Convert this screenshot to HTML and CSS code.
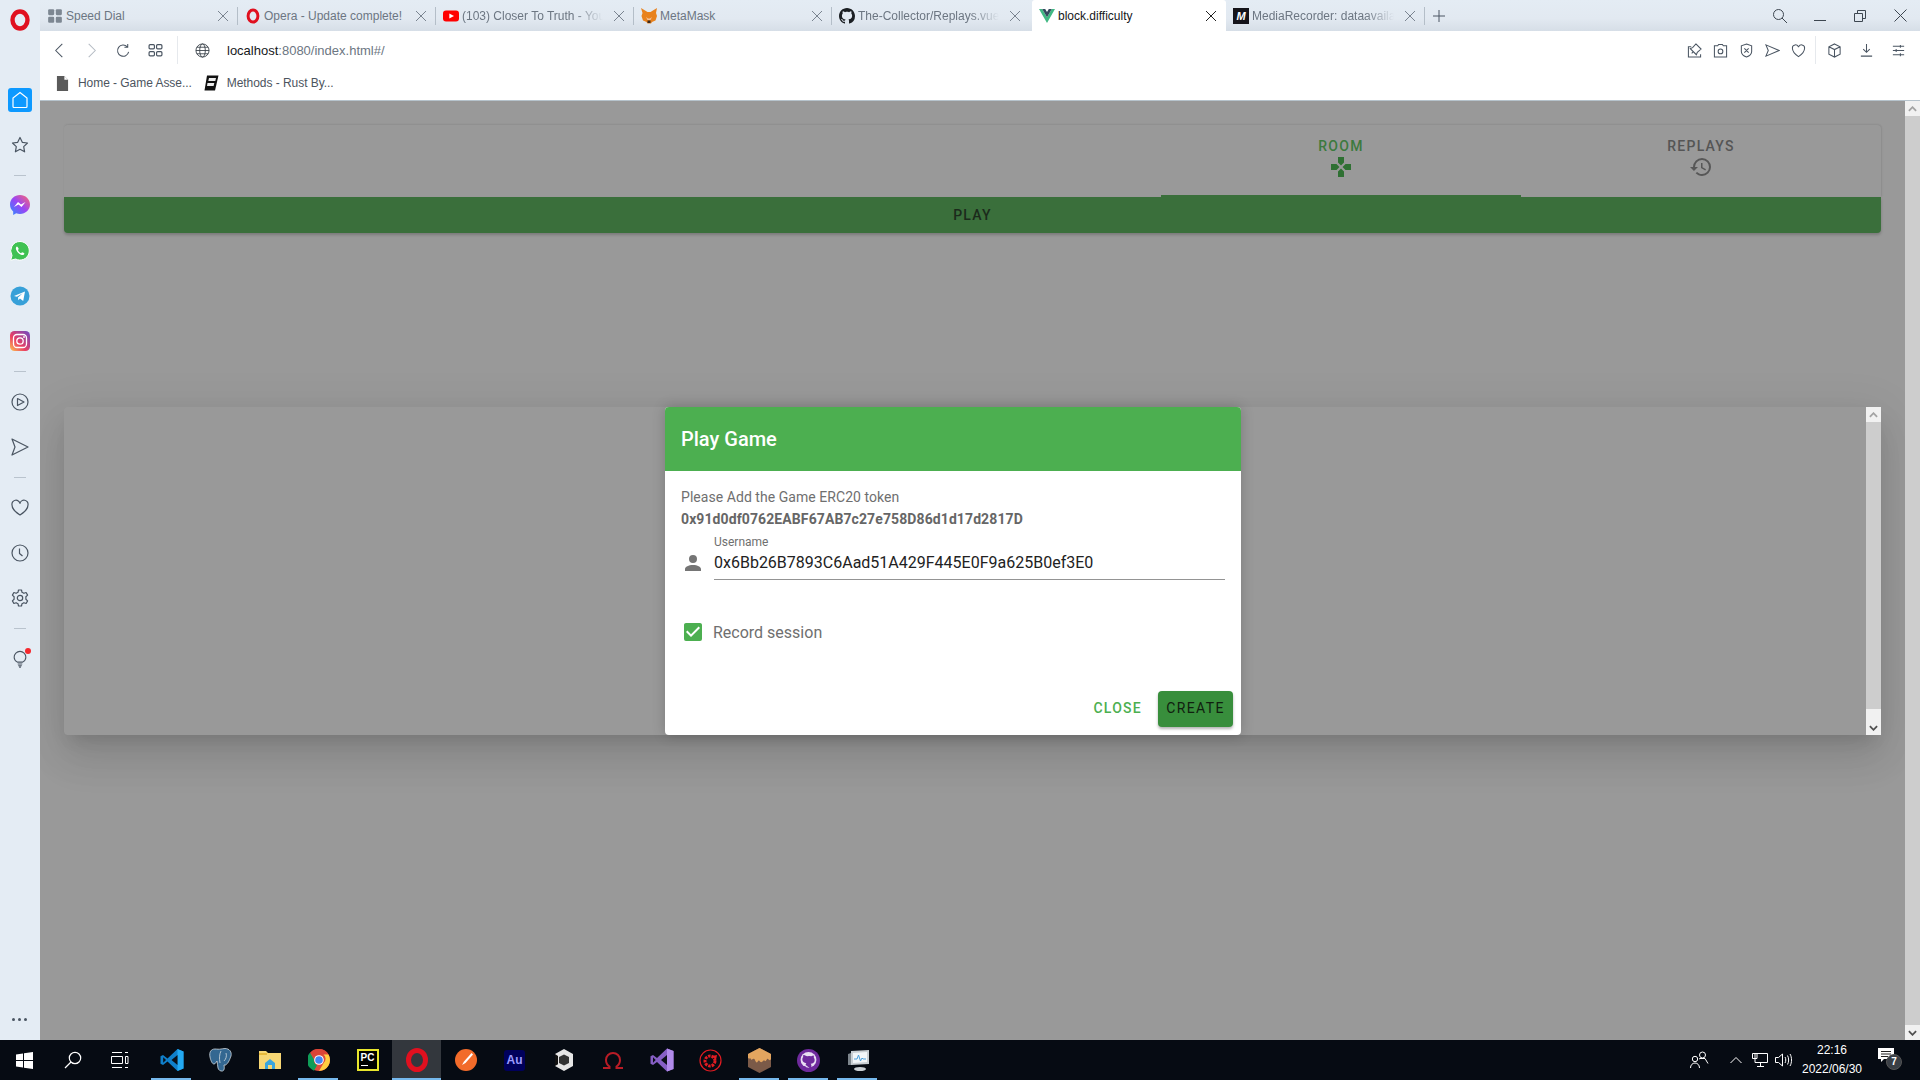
FILE: index.html
```html
<!DOCTYPE html>
<html lang="en">
<head>
    <meta charset="UTF-8">
    <title>block.difficulty</title>
    <link rel="stylesheet" href="styles.css">
</head>
<body>
<div class="desktop">
    <div class="browser">
        <!-- opera sidebar -->
        <aside class="sidebar">
            <div class="side-logo">
                <svg width="20" height="22" viewBox="0 0 20 22"><ellipse cx="10" cy="11" rx="7.500" ry="8.500" fill="none" stroke="#e0101f" stroke-width="4.400"/></svg>
            </div>
            <div class="side-item">
                <div class="side-home"><svg width="18" height="18" viewBox="0 0 18 18"><path d="M9 1.500L16 7v8.500a1 1 0 0 1-1 1H3a1 1 0 0 1-1-1V7z" fill="none" stroke="#fff" stroke-width="1.200"/></svg></div>
            </div>
            <div class="side-item">
                <svg class="side-icon" viewBox="0 0 18 18"><path d="M9 1.500l2.300 4.800 5.200.7-3.800 3.600.9 5.200L9 13.300l-4.600 2.500.9-5.200L1.500 7l5.200-.7z"/></svg>
            </div>
            <div class="side-sep"><span></span></div>
            <div class="side-item">
                <svg width="20" height="21" viewBox="0 0 20 21"><defs><linearGradient id="msg" x1="0" y1="1" x2="1" y2="0"><stop offset="0" stop-color="#2a8cff"/><stop offset=".5" stop-color="#9a45f5"/><stop offset="1" stop-color="#ff6a6a"/></linearGradient></defs><path d="M10 0C4.500 0 0 4.100 0 9.500c0 2.900 1.200 5.300 3.200 7V20l3-1.700c1.200.4 2.500.6 3.800.6 5.500 0 10-4.100 10-9.400S15.500 0 10 0z" fill="url(#msg)"/><path d="M4 12l4-5 3 2.400L15.500 7l-4 5-3-2.400z" fill="#fff"/></svg>
            </div>
            <div class="side-item">
                <svg width="20" height="20" viewBox="0 0 20 20"><path d="M10 .5a9.300 9.300 0 0 0-8 14L.7 19.300l4.900-1.300A9.300 9.300 0 1 0 10 .5z" fill="#3fc252" stroke="#fff"/><path d="M7 5.500c-1.200.6-1.500 2-.6 3.800 1 2 2.700 3.600 4.600 4.400 1.700.7 3 .2 3.400-1 .2-.5-2-1.700-2.400-1.500l-.9 1c-1.300-.4-2.700-1.800-3.200-3.100l.9-1C9 8.300 7.500 5.300 7 5.500z" fill="#fff"/></svg>
            </div>
            <div class="side-item">
                <svg width="20" height="20" viewBox="0 0 20 20"><circle cx="10" cy="10" r="9.500" fill="#37a0d8"/><path d="M4 10l11-4.500-1.800 9.500-3.300-2.400-1.500 1.600-.4-2.800 4.700-4.200-5.800 3.500z" fill="#fff"/></svg>
            </div>
            <div class="side-item">
                <svg width="20" height="20" viewBox="0 0 20 20"><defs><linearGradient id="ig" x1="0" y1="1" x2="1" y2="0"><stop offset="0" stop-color="#fdc74e"/><stop offset=".4" stop-color="#ea3f63"/><stop offset="1" stop-color="#6b4bc6"/></linearGradient></defs><rect width="20" height="20" rx="4.500" fill="url(#ig)"/><rect x="3.500" y="3.500" width="13" height="13" rx="3.500" fill="none" stroke="#fff" stroke-width="1.300"/><circle cx="10" cy="10" r="3.200" fill="none" stroke="#fff" stroke-width="1.300"/><circle cx="14" cy="6" r=".9" fill="#fff"/></svg>
            </div>
            <div class="side-sep"><span></span></div>
            <div class="side-item">
                <svg class="side-icon" viewBox="0 0 18 18"><circle cx="9" cy="9" r="8"/><path d="M6.500 5.500L13 9l-6.500 3.500z"/></svg>
            </div>
            <div class="side-item">
                <svg class="side-icon" viewBox="0 0 18 18"><path d="M1 1l16 8-16 8 3-8z"/></svg>
            </div>
            <div class="side-sep"><span></span></div>
            <div class="side-item">
                <svg class="side-icon" viewBox="0 0 18 18"><path d="M9 16S1 11 1 6a4 4 0 0 1 8-1.500A4 4 0 0 1 17 6c0 5-8 10-8 10z"/></svg>
            </div>
            <div class="side-item">
                <svg class="side-icon" viewBox="0 0 18 18"><circle cx="9" cy="9" r="8"/><path d="M8.500 4.500V9.500l3 2.500"/></svg>
            </div>
            <div class="side-item">
                <svg class="side-icon" viewBox="0 0 18 18"><circle cx="9" cy="9" r="2.700"/><path d="M7.500 1h3l.5 2.300 1.900 1 2.200-.8 1.500 2.600-1.700 1.600v2.600l1.700 1.600-1.500 2.600-2.200-.8-1.900 1-.5 2.300h-3L7 14.700l-1.900-1-2.200.8L1.400 11.900l1.700-1.600V7.700L1.400 6.100l1.500-2.600 2.200.8L7 3.300z"/></svg>
            </div>
            <div class="side-sep"><span></span></div>
            <div class="side-item">
                <svg class="side-icon" viewBox="0 0 18 20"><path d="M6 13.500C4 12.300 2.500 10.500 2.500 8a6.500 6.500 0 0 1 13 0c0 2.500-1.500 4.300-3.500 5.500zM6.500 15.500h5M7 17.500h4M8 19h2"/></svg>
                <span class="side-dot"></span>
            </div>
            <div class="side-more"><i></i><i></i><i></i></div>
        </aside>

        <div class="window">
            <!-- tabs -->
            <div class="tabstrip">
                <div class="tab">
                    <svg class="favicon" viewBox="0 0 14 14" fill="#7d8792"><rect x="1" y="1" width="5.300" height="5.300" rx="1"/><rect x="7.700" y="1" width="5.300" height="5.300" rx="1"/><rect x="1" y="7.700" width="5.300" height="5.300" rx="1"/><rect x="7.700" y="7.700" width="5.300" height="5.300" rx="1"/></svg>
                    <span class="tab-label">Speed Dial</span>
                    <svg class="tab-close" viewBox="0 0 10 10"><path d="M0 0l10 10M10 0L0 10"/></svg>
                </div>
                <div class="tab">
                    <svg class="favicon" viewBox="0 0 14 14"><ellipse cx="7" cy="7" rx="4.300" ry="5.300" fill="none" stroke="#e0101f" stroke-width="2.600"/></svg>
                    <span class="tab-label">Opera - Update complete!</span>
                    <svg class="tab-close" viewBox="0 0 10 10"><path d="M0 0l10 10M10 0L0 10"/></svg>
                </div>
                <div class="tab">
                    <svg class="favicon" viewBox="0 0 16 14"><rect y="1.500" width="16" height="11" rx="3" fill="#f00"/><path d="M6.300 4.500L11 7l-4.700 2.500z" fill="#fff"/></svg>
                    <span class="tab-label fade">(103) Closer To Truth - You</span>
                    <svg class="tab-close" viewBox="0 0 10 10"><path d="M0 0l10 10M10 0L0 10"/></svg>
                </div>
                <div class="tab">
                    <svg class="favicon" viewBox="0 0 16 16"><path d="M0 0l6.500 4h3L16 0l-1 5 1 3-1.500 4.500-3.500 1.500-1 1.500H6.500L5.500 14 2 12.500.5 8l1-3z" fill="#e8821e"/><path d="M5 9l1.500 3h3L11 9l-2 1.500H7z" fill="#f3c29a"/><path d="M6.500 12.500h3V15h-3z" fill="#3a2a20"/></svg>
                    <span class="tab-label">MetaMask</span>
                    <svg class="tab-close" viewBox="0 0 10 10"><path d="M0 0l10 10M10 0L0 10"/></svg>
                </div>
                <div class="tab">
                    <svg class="favicon" viewBox="0 0 16 16"><path fill="#1b1f23" d="M8 0C3.580 0 0 3.580 0 8c0 3.540 2.290 6.530 5.470 7.590.4.070.55-.17.55-.38 0-.19-.01-.82-.01-1.490-2.010.37-2.530-.49-2.690-.94-.09-.23-.48-.94-.82-1.130-.28-.15-.68-.52-.01-.53.63-.01 1.080.58 1.230.82.72 1.210 1.870.87 2.330.66.070-.52.28-.87.51-1.070-1.780-.2-3.640-.89-3.640-3.950 0-.87.31-1.590.82-2.150-.08-.2-.36-1.020.08-2.120 0 0 .67-.21 2.200.82.64-.18 1.320-.27 2-.27.68 0 1.360.09 2 .27 1.530-1.040 2.200-.82 2.200-.82.44 1.100.16 1.920.08 2.120.51.56.82 1.270.82 2.150 0 3.070-1.870 3.750-3.650 3.950.29.25.54.73.54 1.480 0 1.070-.01 1.930-.01 2.200 0 .21.15.46.55.38A8.013 8.013 0 0 0 16 8c0-4.420-3.580-8-8-8z"/></svg>
                    <span class="tab-label fade">The-Collector/Replays.vue a</span>
                    <svg class="tab-close" viewBox="0 0 10 10"><path d="M0 0l10 10M10 0L0 10"/></svg>
                </div>
                <div class="tab tab-active">
                    <svg class="favicon" viewBox="0 0 16 14"><path d="M0 0h3.200L8 8.200 12.800 0H16L8 14z" fill="#41b883"/><path d="M3.200 0h3L8 3.100 9.800 0h3L8 8.200z" fill="#35495e"/></svg>
                    <span class="tab-label">block.difficulty</span>
                    <svg class="tab-close" viewBox="0 0 10 10"><path d="M0 0l10 10M10 0L0 10"/></svg>
                </div>
                <div class="tab tab-last">
                    <span class="mdn-icon">M</span>
                    <span class="tab-label fade">MediaRecorder: dataavailat</span>
                    <svg class="tab-close" viewBox="0 0 10 10"><path d="M0 0l10 10M10 0L0 10"/></svg>
                </div>
                <svg class="new-tab" viewBox="0 0 12 12"><path d="M6 0v12M0 6h12"/></svg>
                <div class="win-controls">
                    <div class="win-btn"><svg width="16" height="16" viewBox="0 0 16 16"><circle cx="6.500" cy="6.500" r="5"/><path d="M10 10l5 5"/></svg></div>
                    <div class="win-btn"><svg width="12" height="12" viewBox="0 0 12 12"><path d="M0 10.500h12"/></svg></div>
                    <div class="win-btn"><svg width="12" height="12" viewBox="0 0 12 12"><path d="M.5 3.500h8v8h-8zM3.500 3.500v-3h8v8h-3"/></svg></div>
                    <div class="win-btn"><svg width="13" height="13" viewBox="0 0 13 13"><path d="M.5.500l12 12M12.500.500l-12 12"/></svg></div>
                </div>
            </div>

            <!-- address bar -->
            <div class="toolbar">
                <div class="tool-slot"><svg class="tool-icon" viewBox="0 0 16 16"><path d="M11 1L4 8l7 7"/></svg></div>
                <div class="tool-slot"><svg class="tool-icon tool-off" viewBox="0 0 16 16"><path d="M5 1l7 7-7 7"/></svg></div>
                <div class="tool-slot"><svg class="tool-icon" viewBox="0 0 16 16"><path d="M13.500 9.500A6 6 0 1 1 12 4M12.500 1v3.500H9"/></svg></div>
                <div class="tool-slot"><svg class="tool-icon" viewBox="0 0 14 14"><rect x="1" y="1.500" width="5" height="4" rx="1"/><rect x="8" y="1.500" width="5" height="4" rx="1"/><rect x="1" y="8" width="5" height="4" rx="1"/><rect x="8" y="8" width="5" height="4" rx="1"/></svg></div>
                <span class="tool-sep first-sep"></span>
                <svg class="globe" viewBox="0 0 16 16"><circle cx="8" cy="8" r="7"/><ellipse cx="8" cy="8" rx="3" ry="7"/><path d="M1 8h14M2 4.500h12M2 11.500h12"/></svg>
                <div class="url"><span class="url-host">localhost</span>:8080/index.html#/</div>
                <div class="tool-right">
                    <div class="tool-slot small"><svg class="tool-icon" viewBox="0 0 16 16"><path d="M4.500 4H1.500v11h13v-3M9.500 1L15 6.500l-4 3.500-1 2.500L3.500 6l2.500-1zM5 11l2-2"/></svg></div>
                    <div class="tool-slot small"><svg class="tool-icon" viewBox="0 0 16 16"><path d="M1.500 3h3.500l1-1.500h4L11 3h3.500v12h-13z"/><circle cx="8" cy="9" r="2.500"/></svg></div>
                    <div class="tool-slot small"><svg class="tool-icon" viewBox="0 0 16 16"><path d="M8 1l5.500 2v6c0 3-3 5-5.500 6-2.500-1-5.500-3-5.500-6V3zM5.700 5.700l4.600 4.600M10.300 5.700l-4.600 4.600"/></svg></div>
                    <div class="tool-slot small"><svg class="tool-icon" viewBox="0 0 16 16"><path d="M1 2l14 6-14 6 2.500-6z"/></svg></div>
                    <div class="tool-slot small"><svg class="tool-icon" viewBox="0 0 16 16"><path d="M8 14.500S1.500 10 1.500 5.500a3.300 3.300 0 0 1 6.500-1 3.300 3.300 0 0 1 6.500 1C14.500 10 8 14.500 8 14.500z"/></svg></div>
                    <span class="tool-sep"></span>
                    <div class="tool-slot"><svg class="tool-icon" viewBox="0 0 16 16"><path d="M8 1l6 3v8l-6 3-6-3V4zM2 4l6 3 6-3M8 7v8"/></svg></div>
                    <div class="tool-slot"><svg class="tool-icon" viewBox="0 0 16 16"><path d="M8 1v9M4.500 6.500L8 10l3.500-3.500M2 14h12"/></svg></div>
                    <div class="tool-slot"><svg class="tool-icon" viewBox="0 0 16 16"><path d="M2 3.500h12M2 8h12M2 12.500h12M10 2v3M5.500 6.500v3M10 11v3"/></svg></div>
                </div>
            </div>

            <!-- bookmarks -->
            <div class="bookmarks">
                <svg class="bm-icon" viewBox="0 0 14 16"><path d="M1 0h8l4 4v12H1z" fill="#5a5a5a"/><path d="M9 0v4h4" fill="#fff"/></svg>
                <span class="bm-label">Home - Game Asse...</span>
                <svg class="bm-book" viewBox="0 0 16 16"><path d="M4 .5h11.500L12 15.500H1.500z" fill="#111"/><path d="M6 3h7l-.7 3h-7zM4.500 8h6.800l-.7 3H4z" fill="#eee"/></svg>
                <span class="bm-label">Methods - Rust By...</span>
            </div>

            <!-- the page, under the dialog scrim -->
            <div class="viewport">
                <main class="page">
                    <section class="nav-card">
                        <div class="nav-tab nav-tab-on">
                            <span>ROOM</span>
                            <svg viewBox="0 0 24 24"><path d="M16.500,9L13.500,12L16.500,15H22V9M9,16.500V22H15V16.500L12,13.500M7.500,9H2V15H7.500L10.500,12M15,7.500V2H9V7.500L12,10.500L15,7.500Z"/></svg>
                        </div>
                        <div class="nav-tab">
                            <span>REPLAYS</span>
                            <svg viewBox="0 0 24 24"><path d="M13.500,8H12V13L16.280,15.540L17,14.330L13.500,12.250V8M13,3A9,9 0 0,0 4,12H1L4.960,16.030L9,12H6A7,7 0 0,1 13,5A7,7 0 0,1 20,12A7,7 0 0,1 13,19C11.070,19 9.320,18.210 8.060,16.940L6.640,18.360C8.270,20 10.500,21 13,21A9,9 0 0,0 22,12A9,9 0 0,0 13,3"/></svg>
                        </div>
                    </section>
                    <div class="play-bar">PLAY</div>

                    <section class="room-card">
                        <div class="dialog">
                            <header class="dialog-head">Play Game</header>
                            <div class="dialog-body">
                                <p class="msg">Please Add the Game ERC20 token</p>
                                <p class="msg token">0x91d0df0762EABF67AB7c27e758D86d1d17d2817D</p>
                                <div class="field">
                                    <svg class="mdi" viewBox="0 0 24 24"><path d="M12,4A4,4 0 0,1 16,8A4,4 0 0,1 12,12A4,4 0 0,1 8,8A4,4 0 0,1 12,4M12,14C16.420,14 20,15.790 20,18V20H4V18C4,15.790 7.580,14 12,14Z"/></svg>
                                    <div class="field-box">
                                        <label class="field-label">Username</label>
                                        <div class="field-value">0x6Bb26B7893C6Aad51A429F445E0F9a625B0ef3E0</div>
                                    </div>
                                </div>
                                <div class="check-row">
                                    <svg class="mdi check" viewBox="0 0 24 24"><path d="M10,17L5,12L6.410,10.580L10,14.170L17.590,6.580L19,8M19,3H5C3.890,3 3,3.890 3,5V19A2,2 0 0,0 5,21H19A2,2 0 0,0 21,19V5C21,3.890 20.100,3 19,3Z"/></svg>
                                    <span>Record session</span>
                                </div>
                            </div>
                            <div class="dialog-actions">
                                <button class="btn-text">CLOSE</button>
                                <button class="btn-create">CREATE</button>
                            </div>
                        </div>
                        <div class="inner-scroll">
                            <div class="sb-up"><svg viewBox="0 0 10 6"><path d="M1 5l4-4 4 4" stroke="#a3a3a3"/></svg></div>
                            <div class="sb-track"></div>
                            <div class="sb-down"><svg viewBox="0 0 10 6"><path d="M1 1l4 4 4-4" stroke="#505050"/></svg></div>
                        </div>
                    </section>
                </main>
                <div class="page-scroll">
                    <div class="sb-up"><svg viewBox="0 0 10 6"><path d="M1 5l4-4 4 4" stroke="#a3a3a3"/></svg></div>
                    <div class="sb-track"></div>
                    <div class="sb-down"><svg viewBox="0 0 10 6"><path d="M1 1l4 4 4-4" stroke="#505050"/></svg></div>
                </div>
            </div>
        </div>
    </div>

    <!-- windows taskbar -->
    <footer class="taskbar">
        <div class="task"><svg width="17" height="17" viewBox="0 0 17 17" fill="#fff"><path d="M0 2.400l7-1v6.600H0zM8 1.200L17 0v8H8zM0 9h7v6.600l-7-1zM8 9h9v8l-9-1.200z"/></svg></div>
        <div class="task"><svg class="nudge-search" width="18" height="18" viewBox="0 0 18 18" fill="none" stroke="#fff" stroke-width="1.200"><circle cx="11" cy="7" r="5.700"/><path d="M7 11l-6 6"/></svg></div>
        <div class="task"><svg class="nudge-view" width="18" height="16" viewBox="0 0 18 16" fill="none" stroke="#fff"><path d="M.5 4.500h11v7H.5zM1 .5h10M1 15.500h10M14 .5h3M14 15.500h3M14.500 4.500h2.500v7h-2.500z"/></svg></div>
        <div class="task task-on">
            <svg width="24" height="24" viewBox="0 0 24 24"><path d="M17.500 1L7.500 10.500 3 7 .5 8.200v7.600L3 17l4.500-3.500 10 9.500 6-2.500V3.500z" fill="#0f7fca"/><path d="M17.500 1l6 2.500v17l-6 2.500z" fill="#23a9f2"/><path d="M17.500 7l-6 5 6 5z" fill="#0a0f17"/><path d="M3.200 9.200v5.600L6 12z" fill="#0a0f17"/></svg>
        </div>
        <div class="task">
            <svg width="24" height="24" viewBox="0 0 24 24"><path d="M6 1c-4 0-6 3-5 8 .6 3 2 7 4 7 1.500 0 2-2 3-3 .5 2 .5 5 1 7s2.500 3.500 4.500 3c2-.5 2-3 1.500-6 3 .5 2-1 3-1.500 1 0 3-4.500 4-7.500 1-4-1.500-7.500-6-7.500-1.500 0-3 .5-4 .5C10 1.500 8 1 6 1z" fill="#336791" stroke="#cfd8de" stroke-width=".8"/><path d="M12 3c-1.500 3-2 7-1 12M17 5c1 3 0 6-2 8" fill="none" stroke="#cfd8de" stroke-width=".8"/></svg>
        </div>
        <div class="task">
            <svg width="22" height="20" viewBox="0 0 22 20"><path d="M0 1h7l2 2h13v16H0z" fill="#f7d774"/><path d="M0 3h8v2H0z" fill="#e6b93a"/><path d="M6 13l5-4 5 4v6H6z" fill="#3aa5dc"/><path d="M9 15h4v4H9z" fill="#f7d774"/></svg>
        </div>
        <div class="task task-on">
            <svg width="22" height="22" viewBox="0 0 22 22"><circle cx="11" cy="11" r="11" fill="#dd4b3e"/><path d="M11 0a11 11 0 0 1 9.500 5.500H11a5.500 5.500 0 0 0-5 3L2 3.800A11 11 0 0 1 11 0z" fill="#db4437"/><path d="M2 3.800l4 6.600a5.500 5.500 0 0 0 3 5.800L6 21.700A11 11 0 0 1 2 3.800z" fill="#0f9d58"/><path d="M20.500 5.500A11 11 0 0 1 11 22l4.800-8.200A5.500 5.500 0 0 0 15.500 5.500z" fill="#ffcd40"/><circle cx="11" cy="11" r="4.800" fill="#fff"/><circle cx="11" cy="11" r="3.800" fill="#4285f4"/></svg>
        </div>
        <div class="task">
            <div class="pc-logo"><span>PC</span><i></i></div>
        </div>
        <div class="task task-on task-hot">
            <svg width="24" height="24" viewBox="0 0 24 24"><ellipse cx="12" cy="12" rx="8.500" ry="9.500" fill="none" stroke="#e0101f" stroke-width="5"/></svg>
        </div>
        <div class="task">
            <svg width="22" height="22" viewBox="0 0 22 22"><circle cx="11" cy="11" r="11" fill="#f26b2a"/><path d="M16.500 4L9 12.500l-2 3.500 3.500-2L18 5.500z" fill="#fff"/></svg>
        </div>
        <div class="task"><div class="au-logo">Au</div></div>
        <div class="task">
            <svg width="20" height="24" viewBox="0 0 20 24"><path d="M10 1l9 5v12l-9 5-9-5V6z" fill="#e6e6e6"/><path d="M5 9l5-2.500L15 9v6l-5 2.500L5 15z" fill="#333"/><path d="M1 6v12l3-1.700V8z" fill="#111"/></svg>
        </div>
        <div class="task">
            <svg width="22" height="20" viewBox="0 0 22 20" fill="none" stroke="#b81c26" stroke-width="2"><path d="M1 18h6.500v-1.500C5 15 4 13 4 10a7 7 0 0 1 14 0c0 3-1 5-3.500 6.500V18H21"/></svg>
        </div>
        <div class="task">
            <svg width="24" height="24" viewBox="0 0 24 24"><path d="M17 .5L7 10 3 7 .5 8.200v7.600L3 17l4-3 10 9.500 6.500-2.500V3z" fill="#865fc5"/><path d="M17 .5l6.500 2.500v18L17 23.500z" fill="#b18bea"/><path d="M17 7l-6 5 6 5z" fill="#0a0f17"/><path d="M3 9.300v5.400L5.700 12z" fill="#0a0f17"/></svg>
        </div>
        <div class="task">
            <svg width="23" height="23" viewBox="0 0 23 23"><circle cx="11.500" cy="11.500" r="10.500" fill="none" stroke="#e11c22" stroke-width="1.200"/><circle cx="11" cy="12" r="5" fill="none" stroke="#e11c22" stroke-width="3" stroke-dasharray="2.500 1"/><path d="M13 7l5-1-1 5z" fill="#e11c22"/></svg>
        </div>
        <div class="task task-on">
            <svg width="23" height="25" viewBox="0 0 23 25"><path d="M11.500 0L23 6v13l-11.500 6L0 19V6z" fill="#7b5a48"/><path d="M11.500 0L23 6v5c-1 2-2 1-3 0s-2 3-3 2-1-1-2 0-2 2-3.500 0-2 3-3.500 1-1-4-3-3-2 1-2 0-2 0-3-1V6z" fill="#e3a55f"/></svg>
        </div>
        <div class="task task-on">
            <svg width="23" height="23" viewBox="0 0 16 16"><circle cx="8" cy="8" r="8" fill="#6e2a9c"/><circle cx="8" cy="7.500" r="5.500" fill="#e9dff2"/><path d="M6 14v-2c-2 .4-2.500-1-3-1.500M10 14v-2.500c0-.6-.2-1-.5-1.200 1.600-.2 2.800-.9 2.800-2.700 0-.7-.2-1.200-.6-1.600.1-.4.1-1-.1-1.500-.6 0-1.200.3-1.600.6a6 6 0 0 0-3 0C5.600 4.400 5 4.100 4.400 4.100c-.2.500-.2 1.100-.1 1.500-.4.400-.6.9-.6 1.600 0 1.800 1.200 2.500 2.800 2.700-.3.200-.5.600-.5 1.200" fill="#6e2a9c"/></svg>
        </div>
        <div class="task task-on">
            <svg width="24" height="24" viewBox="0 0 24 24"><path d="M5 3l18-1v14L5 17z" fill="#c9cfd4"/><path d="M7 5l14-1v10L7 15z" fill="#f2f6f9"/><path d="M8 11h3l1.500-4 2 6 1.500-3 1 1h3" fill="none" stroke="#4a9fdc"/><path d="M2 6l3-1v12H2z" fill="#7c858c"/><ellipse cx="14" cy="21" rx="6" ry="2" fill="#c9cfd4"/></svg>
        </div>

        <div class="tray">
            <svg class="tray-people" width="20" height="18" viewBox="0 0 20 18" fill="none" stroke="#fff"><circle cx="12.500" cy="4" r="3"/><circle cx="5" cy="8" r="2.700"/><path d="M9 8l1-.5h5l3 5M.5 17c0-3 2-5 4.500-5s4.500 2 4.500 5"/></svg>
            <svg class="tray-caret" width="12" height="8" viewBox="0 0 12 8" fill="none" stroke="#fff"><path d="M.5 7L6 1.500 11.500 7"/></svg>
            <svg class="tray-net" width="16" height="14" viewBox="0 0 16 14" fill="none" stroke="#fff"><path d="M3 .5h12.500v9H3zM.5 .5h4.500v5H.5zM5 13.500h7M8.500 9.500v4"/></svg>
            <svg class="tray-vol" width="17" height="14" viewBox="0 0 17 14" fill="none" stroke="#fff"><path d="M.5 4.500h3L7.500 1v12l-4-3.500h-3zM10 4c1 1.500 1 4.500 0 6M12.500 2.500c1.500 2.500 1.500 6.500 0 9M15 1c2 3 2 9 0 12"/></svg>
            <div class="clock"><span>22:16</span><span>2022/06/30</span></div>
            <div class="notify">
                <svg width="16" height="14" viewBox="0 0 16 14"><path d="M0 0h16v11H6l-3 3v-3H0z" fill="#fff"/><path d="M3 3.500h10M3 6h10M3 8.500h7" stroke="#222"/></svg>
                <span class="notify-badge">7</span>
            </div>
        </div>
    </footer>
</div>
</body>
</html>
```

FILE: styles.css
```css
* {
    box-sizing: border-box;
}
body {
    margin: 0;
    font-family: "Liberation Sans", Arial, sans-serif;
    overflow: hidden;
}
.desktop {
    width: 1920px;
    height: 1080px;
    display: flex;
    flex-direction: column;
}
.browser {
    display: flex;
    height: 1040px;
}

/* sidebar */
.sidebar {
    position: relative;
    width: 40px;
    background-color: #e4ecf4;
    flex-shrink: 0;
}
.side-logo {
    height: 77px;
    padding-top: 9px;
    display: flex;
    justify-content: center;
    align-items: flex-start;
}
.side-item {
    position: relative;
    height: 45px;
    display: flex;
    align-items: center;
    justify-content: center;
}
.side-home {
    width: 24px;
    height: 24px;
    background-color: #0d99ff;
    border-radius: 3px;
    display: flex;
    align-items: center;
    justify-content: center;
}
.side-icon {
    width: 18px;
    height: 18px;
    fill: none;
    stroke: #4a5562;
    stroke-width: 1.2;
    stroke-linejoin: round;
}
.side-sep {
    height: 16px;
    display: flex;
    align-items: center;
    justify-content: center;
}
.side-sep span {
    width: 12px;
    height: 1px;
    background-color: #b9c3cd;
}
.side-dot {
    position: absolute;
    top: 12px;
    right: 9px;
    width: 6px;
    height: 6px;
    border-radius: 50%;
    background-color: #f5282d;
}
.side-more {
    position: absolute;
    left: 12px;
    bottom: 19px;
    display: flex;
    gap: 3px;
}
.side-more i {
    width: 3px;
    height: 3px;
    border-radius: 50%;
    background-color: #4a5562;
}

/* tabs */
.window {
    flex: 1;
    min-width: 0;
    display: flex;
    flex-direction: column;
}
.tabstrip {
    height: 31px;
    display: flex;
    align-items: center;
    background: linear-gradient(#e4ecf4, #e2e9f1 60%, #d6dee7);
}
.tab {
    width: 198px;
    height: 31px;
    padding: 0 10px 0 7px;
    display: flex;
    align-items: center;
    font-size: 12px;
    color: #6c7682;
    position: relative;
}
.tab::after {
    content: "";
    position: absolute;
    right: 0;
    top: 7px;
    height: 18px;
    width: 1px;
    background-color: #b4bec8;
}
.tab-active {
    width: 194px;
    margin-left: 2px;
    background-color: #fff;
    color: #16181b;
    border-radius: 3px 3px 0 0;
}
.tab-active::after,
.tab:nth-child(5)::after {
    display: none;
}
.tab-last {
    width: 199px;
}
.favicon {
    width: 16px;
    height: 16px;
    margin-right: 3px;
    flex-shrink: 0;
}
.mdn-icon {
    width: 16px;
    height: 16px;
    margin-right: 3px;
    background-color: #15141a;
    color: #fff;
    font-size: 11px;
    font-weight: bold;
    font-style: italic;
    text-align: center;
    line-height: 16px;
    flex-shrink: 0;
}
.tab-label {
    flex: 1;
    white-space: nowrap;
    min-width: 0;
}
.fade {
    mask-image: linear-gradient(to right, #000 78%, transparent 98%);
}
.tab-close {
    width: 10px;
    height: 10px;
    margin: 0 0 0 8px;
    fill: none;
    stroke: #7a8490;
    flex-shrink: 0;
}
.tab-active .tab-close {
    stroke: #222;
}
.new-tab {
    width: 12px;
    height: 12px;
    margin-left: 8px;
    fill: none;
    stroke: #4a5562;
}
.win-controls {
    margin-left: auto;
    display: flex;
}
.win-btn {
    width: 40px;
    height: 31px;
    display: flex;
    align-items: center;
    justify-content: center;
}
.win-btn svg {
    fill: none;
    stroke: #3d4650;
}

/* address bar */
.toolbar {
    height: 38px;
    padding-left: 3px;
    padding-right: 6px;
    background-color: #fff;
    display: flex;
    align-items: center;
}
.tool-slot {
    width: 32px;
    height: 32px;
    display: flex;
    align-items: center;
    justify-content: center;
}
.tool-slot.small {
    width: 26px;
}
.tool-icon {
    width: 15px;
    height: 15px;
    fill: none;
    stroke: #4a5562;
    stroke-width: 1.1;
}
.tool-off {
    stroke: #b5bcc4;
}
.tool-sep {
    width: 1px;
    height: 28px;
    background-color: #e6e9ed;
    margin: 0 2px 0 4px;
}
.first-sep {
    margin: 0 0 0 6px;
}
.globe {
    width: 15px;
    height: 15px;
    margin-left: 17px;
    fill: none;
    stroke: #333b44;
    stroke-width: .9;
}
.url {
    margin-left: 17px;
    font-size: 13px;
    color: #6c7682;
}
.url-host {
    color: #16181b;
}
.tool-right {
    margin-left: auto;
    display: flex;
    align-items: center;
}
.bookmarks {
    height: 32px;
    padding: 0 0 3px 16px;
    background-color: #fff;
    border-bottom: 1px solid #b6c3cc;
    display: flex;
    align-items: center;
    font-size: 12px;
    letter-spacing: -.05px;
    color: #4c545e;
}
.bm-icon {
    width: 13px;
    height: 15px;
    margin-right: 9px;
}
.bm-book {
    width: 16px;
    height: 16px;
    margin: 0 8px 0 11px;
}
.bm-label {
    white-space: nowrap;
}

/* page under the scrim */
.viewport {
    flex: 1;
    display: flex;
    min-height: 0;
    overflow: hidden;
    background-color: #999;
    font-family: Roboto, sans-serif;
}
.page {
    flex: 1;
    padding: 24px;
    min-width: 0;
}
.nav-card {
    height: 72px;
    display: flex;
    justify-content: flex-end;
    border-radius: 4px 4px 0 0;
    box-shadow: 0 -1px 2px rgba(0, 0, 0, .05), 1px 0 2px rgba(0, 0, 0, .08);
}
.nav-tab {
    width: 360px;
    height: 72px;
    padding-top: 13px;
    display: flex;
    flex-direction: column;
    align-items: center;
    font-size: 14px;
    font-weight: 500;
    letter-spacing: 1.25px;
    color: #555;
    line-height: 16px;
    border-bottom: 2px solid transparent;
}
.nav-tab svg {
    width: 24px;
    height: 24px;
    margin-top: 1px;
    fill: #575757;
}
.nav-tab-on {
    color: #3c7a3e;
    border-bottom-color: #3a6f3b;
}
.nav-tab-on svg {
    fill: #2f7033;
}
.play-bar {
    height: 36px;
    background-color: #3a6f3b;
    border-radius: 0 0 4px 4px;
    box-shadow: 0 2px 3px rgba(0, 0, 0, .2);
    text-align: center;
    line-height: 36px;
    font-size: 14px;
    font-weight: 500;
    letter-spacing: 1.25px;
    color: #1b2a1b;
}
.room-card {
    margin-top: 174px;
    height: 328px;
    display: flex;
    border-radius: 4px;
    box-shadow: 0 11px 15px -7px rgba(0, 0, 0, .11), 0 24px 38px 3px rgba(0, 0, 0, .08), 0 9px 46px 8px rgba(0, 0, 0, .07);
}
.dialog {
    width: 576px;
    margin-left: 601px;
    margin-right: auto;
    background-color: #fff;
    border-radius: 4px;
    display: flex;
    flex-direction: column;
    box-shadow: 0 0 14px rgba(0, 0, 0, .2);
}
.dialog-head {
    height: 64px;
    padding-left: 16px;
    background-color: #4caf50;
    color: #fff;
    font-size: 20px;
    font-weight: 500;
    line-height: 64px;
    border-radius: 4px 4px 0 0;
}
.dialog-body {
    padding: 15px 16px 0;
    color: #6f6f6f;
}
.msg {
    margin: 0;
    font-size: 14px;
    line-height: 22px;
    letter-spacing: .05px;
}
.token {
    font-weight: 700;
    letter-spacing: .1px;
    color: #666;
}
.field {
    display: flex;
    align-items: flex-end;
    gap: 9px;
    margin-top: 6px;
}
.mdi {
    width: 24px;
    height: 24px;
    fill: #757575;
    flex-shrink: 0;
    margin-bottom: 5px;
}
.field-box {
    flex: 1;
    border-bottom: 1px solid #949494;
    height: 44px;
}
.field-label {
    display: block;
    font-size: 12px;
    line-height: 12px;
}
.field-value {
    margin-top: 3px;
    font-size: 16px;
    line-height: 24px;
    color: #222;
}
.check-row {
    display: flex;
    align-items: center;
    gap: 8px;
    margin-top: 40px;
    font-size: 16px;
    height: 24px;
}
.check {
    fill: #4caf50;
    margin: 0;
}
.dialog-actions {
    margin-top: auto;
    padding: 0 8px 8px;
    display: flex;
    justify-content: flex-end;
    align-items: center;
}
.dialog-actions button {
    height: 36px;
    padding: 0 0 2px;
    border: none;
    border-radius: 4px;
    background: none;
    font-family: Roboto, sans-serif;
    font-size: 14px;
    font-weight: 500;
    letter-spacing: 1.25px;
}
.dialog-actions .btn-text {
    padding: 0 16px 2px;
    color: #4caf50;
}
.dialog-actions .btn-create {
    width: 75px;
    background-color: #388e3c;
    color: #10200f;
    font-weight: 400;
    letter-spacing: 1.4px;
    box-shadow: 0 2px 3px rgba(0, 0, 0, .3);
}

/* scrollbars */
.inner-scroll,
.page-scroll {
    width: 15px;
    flex-shrink: 0;
    display: flex;
    flex-direction: column;
    background-color: #cdcdcd;
}
.sb-track {
    flex: 1;
}
.sb-up {
    height: 15px;
    background-color: #f1f1f1;
    display: flex;
    align-items: center;
    justify-content: center;
}
.sb-down {
    height: 26px;
    padding-bottom: 4px;
    background-color: #f1f1f1;
    display: flex;
    align-items: flex-end;
    justify-content: center;
}
.page-scroll .sb-down {
    height: 15px;
    padding-bottom: 0;
    align-items: center;
}
.sb-up svg,
.sb-down svg {
    width: 9px;
    height: 6px;
    fill: none;
    stroke-width: 2;
}

/* taskbar */
.taskbar {
    height: 40px;
    background-color: #060b13;
    display: flex;
    align-items: center;
}
.task {
    width: 49px;
    height: 40px;
    display: flex;
    align-items: center;
    justify-content: center;
    position: relative;
}
.nudge-search {
    margin-right: 2px;
}
.nudge-view {
    margin-right: 5px;
}
.task-on::after {
    content: "";
    position: absolute;
    left: 4px;
    right: 5px;
    bottom: 0;
    height: 2px;
    background-color: #76b9ed;
}
.task-hot {
    background-color: #33373d;
}
.task-hot::after {
    left: 0;
    right: 0;
}
.pc-logo {
    width: 22px;
    height: 22px;
    background-color: #000;
    border: 2px solid #e8e62d;
    color: #fff;
    font-size: 10px;
    font-weight: bold;
    line-height: 11px;
    padding: 1px 0 0 2px;
    font-family: "Liberation Sans", sans-serif;
}
.pc-logo span {
    display: block;
}
.pc-logo i {
    display: block;
    width: 7px;
    height: 1px;
    background-color: #fff;
    margin-top: 2px;
}
.au-logo {
    width: 21px;
    height: 21px;
    background-color: #00005b;
    color: #9a9aff;
    font-size: 12px;
    font-weight: bold;
    text-align: center;
    line-height: 21px;
    border-radius: 3px;
}
.tray {
    margin-left: auto;
    display: flex;
    align-items: center;
    color: #fff;
}
.tray-people {
    margin-right: 20px;
}
.tray-caret {
    margin-right: 10px;
}
.tray-net {
    margin-right: 7px;
}
.clock {
    width: 70px;
    margin-left: 5px;
    display: flex;
    flex-direction: column;
    align-items: center;
    font-size: 12px;
    line-height: 19px;
    font-family: "Liberation Sans", sans-serif;
}
.notify {
    position: relative;
    width: 24px;
    height: 24px;
    margin: 0 18px 0 11px;
}
.notify-badge {
    position: absolute;
    left: 8px;
    top: 6px;
    width: 16px;
    height: 16px;
    border-radius: 50%;
    background-color: #3a3f46;
    border: 1px solid #555;
    font-size: 10px;
    font-weight: bold;
    line-height: 14px;
    text-align: center;
}
```
